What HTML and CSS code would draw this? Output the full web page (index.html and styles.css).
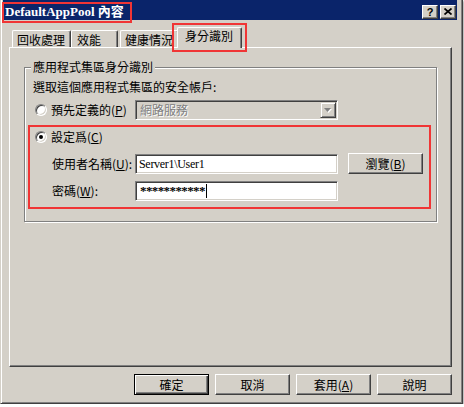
FILE: index.html
```html
<!DOCTYPE html>
<html>
<head>
<meta charset="utf-8">
<link rel="stylesheet" href="styles.css">
</head>
<body>
<div class="window">
  <div class="titlebar">
    <span class="title">DefaultAppPool 內容</span>
    <div class="title-buttons">
      <span class="tbtn help">?</span>
      <span class="tbtn close"><svg width="8" height="7" viewBox="0 0 8 7"><path d="M0.5 0.5L7.5 6.5M7.5 0.5L0.5 6.5" stroke="#000" stroke-width="1.7" fill="none"/></svg></span>
    </div>
  </div>

  <div class="content">
    <div class="tabs">
      <div class="tab t1">回收處理</div>
      <div class="tab t2">效能</div>
      <div class="tab t3">健康情況</div>
      <div class="tab active">身分識別</div>
    </div>

    <div class="panel">
      <div class="group">
        <div class="group-label">應用程式集區身分識別</div>
        <div class="hint">選取這個應用程式集區的安全帳戶:</div>

        <div class="row predefined">
          <span class="radio"></span>
          <span class="radio-text wide">預先定義的(<u>P</u>)</span>
          <div class="combo">
            <span class="combo-text">網路服務</span>
            <span class="combo-btn"><svg width="8" height="5" viewBox="0 0 8 5"><path d="M1 1h7L4.5 5z" fill="#fff"/><path d="M0 0h7L3.5 4z" fill="#808080"/></svg></span>
          </div>
        </div>

        <div class="custom">
          <div class="row choice">
            <span class="radio checked"></span>
            <span class="radio-text">設定爲(<u>C</u>)</span>
          </div>
          <div class="row field user">
            <span class="field-label">使用者名稱(<u>U</u>):</span>
            <div class="textbox">Server1\User1</div>
            <button class="btn browse">瀏覽(<u>B</u>)</button>
          </div>
          <div class="row field pass">
            <span class="field-label">密碼(<u>W</u>):</span>
            <div class="textbox secret">***********<span class="caret"></span></div>
          </div>
        </div>
      </div>
    </div>

    <div class="actions">
      <button class="btn default">確定</button>
      <button class="btn">取消</button>
      <button class="btn">套用(<u>A</u>)</button>
      <button class="btn">說明</button>
    </div>
  </div>

  <div class="mark mark-title"></div>
  <div class="mark mark-tab"></div>
</div>
</body>
</html>
```

FILE: styles.css
```css
* {
    box-sizing: border-box;
}

body {
    margin: 0;
    background: #fff;
    font-family: "Noto Sans CJK TC", "Noto Sans", sans-serif;
    font-size: 12px;
    line-height: 14px;
    color: #000;
}

u {
    text-underline-offset: 1px;
}

.window {
    position: relative;
    width: 463px;
    height: 404px;
    padding: 0 5px 0 2px;
    background: #d4d0c8;
    border-left: 1px solid #d4d0c8;
    border-right: 1px solid #404040;
    border-bottom: 1px solid #404040;
    box-shadow: inset 1px 0 0 #fff, inset -1px -1px 0 #808080, 1px 1px 2px rgba(0,0,0,0.35);
}

/* title bar */
.titlebar {
    display: flex;
    align-items: center;
    justify-content: space-between;
    height: 20px;
    padding: 3px 1px 0 2px;
    background: #0a246a;
    color: #fff;
}

.title {
    font-family: "Liberation Serif", "Noto Sans CJK TC", serif;
    font-weight: bold;
    font-size: 13px;
}

.title-buttons {
    display: flex;
    gap: 2px;
}

.tbtn {
    display: flex;
    align-items: center;
    justify-content: center;
    width: 16px;
    height: 14px;
    background: #d4d0c8;
    color: #000;
    border: 1px solid;
    border-color: #fff #404040 #404040 #fff;
    box-shadow: inset -1px -1px 0 #808080;
}

.help {
    font-family: "Liberation Sans", sans-serif;
    font-weight: bold;
    font-size: 11px;
    line-height: 12px;
}

/* tabs */
.content {
    padding-left: 6px;
}

.tabs {
    display: flex;
    align-items: flex-end;
    height: 27px;
    padding: 7px 0 0 3px;
}

.tab {
    height: 17px;
    padding: 2px 0 0 4px;
    white-space: nowrap;
    border-top: 1px solid #fff;
    border-left: 1px solid #fff;
    border-right: 1px solid #404040;
    border-radius: 2px 2px 0 0;
    box-shadow: inset -1px 0 0 #808080;
    background: #d4d0c8;
}

.t1 { width: 59px; }
.t2 { width: 47px; padding-left: 5px; }
.t3 { width: 59px; margin-left: 2px; }

.tab.active {
    position: relative;
    z-index: 1;
    width: 65px;
    height: 21px;
    margin-left: -2px;
    margin-bottom: -1px;
    padding: 1px 0 0 7px;
}

/* panel */
.panel {
    width: 443px;
    height: 320px;
    padding: 19px 0 0 14px;
    border: 1px solid;
    border-color: #fff #404040 #404040 #fff;
    box-shadow: inset -1px -1px 0 #808080;
}

.group {
    display: flex;
    flex-direction: column;
    align-items: flex-start;
    width: 413px;
    height: 155px;
    border: 1px solid #808080;
    box-shadow: 1px 1px 0 #fff, inset 1px 1px 0 #fff;
}

.group-label {
    margin: -8px 0 0 6px;
    padding: 0 2px;
    background: #d4d0c8;
}

.hint {
    margin: 6px 0 0 8px;
}

.row {
    display: flex;
    align-items: center;
}

.predefined {
    margin: 6px 0 0 10px;
}

.radio {
    width: 12px;
    height: 12px;
    flex: none;
    display: flex;
    align-items: center;
    justify-content: center;
    border-radius: 50%;
    background: #fff;
    border: 1px solid;
    border-color: #808080 #fff #fff #808080;
    box-shadow: inset 1px 1px 0 #404040, inset -1px -1px 0 #d4d0c8;
}

.radio.checked::after {
    content: "";
    width: 4px;
    height: 4px;
    border-radius: 50%;
    background: #000;
}

.radio-text {
    margin-left: 4px;
    white-space: nowrap;
}

.radio-text.wide {
    width: 84px;
}

.combo {
    display: flex;
    align-items: center;
    width: 203px;
    height: 20px;
    border: 1px solid;
    border-color: #808080 #fff #fff #808080;
    box-shadow: inset 1px 1px 0 #404040, inset -1px -1px 0 #d4d0c8;
}

.combo-text {
    padding-left: 4px;
    color: #808080;
    text-shadow: 1px 1px 0 #fff;
}

.combo-btn {
    display: flex;
    align-items: center;
    justify-content: center;
    width: 16px;
    height: 16px;
    margin: 0 1px 0 auto;
    border: 1px solid;
    border-color: #d4d0c8 #404040 #404040 #d4d0c8;
    box-shadow: inset 1px 1px 0 #fff, inset -1px -1px 0 #808080;
}

/* highlighted part */
.custom {
    width: 403px;
    height: 84px;
    margin: 5px 0 0 3px;
    padding: 2px 0 0 5px;
    border: 2px solid #f03535;
}

.choice {
    height: 16px;
}

.field {
    margin-left: 17px;
}

.user {
    margin-top: 8px;
}

.pass {
    margin-top: 7px;
}

.field-label {
    width: 83px;
    white-space: nowrap;
}

.textbox {
    display: flex;
    align-items: center;
    width: 203px;
    height: 20px;
    padding-left: 3px;
    background: #fff;
    font-family: "Liberation Serif", serif;
    font-size: 12px;
    letter-spacing: -0.3px;
    border: 1px solid;
    border-color: #808080 #fff #fff #808080;
    box-shadow: inset 1px 1px 0 #404040, inset -1px -1px 0 #d4d0c8;
}

.textbox.secret {
    padding-left: 4px;
    font-weight: bold;
    font-size: 13px;
    letter-spacing: -0.6px;
}

.caret {
    display: inline-block;
    width: 1px;
    height: 14px;
    margin-left: 1px;
    background: #000;
}

.btn {
    width: 75px;
    height: 21px;
    padding: 0;
    background: #d4d0c8;
    font-family: inherit;
    font-size: 12px;
    line-height: 14px;
    color: #000;
    border: 1px solid;
    border-color: #fff #404040 #404040 #fff;
    box-shadow: inset -1px -1px 0 #808080;
}

.browse {
    margin-left: 10px;
}

.actions {
    display: flex;
    justify-content: flex-end;
    gap: 6px;
    width: 443px;
    margin-top: 7px;
}

.btn.default {
    border-color: #000;
    box-shadow: inset 1px 1px 0 #fff, inset -1px -1px 0 #404040, inset -2px -2px 0 #808080;
}

/* red annotation boxes */
.mark {
    position: absolute;
    border: 2px solid #f03535;
}

.mark-title {
    left: 1px;
    top: 2px;
    width: 130px;
    height: 21px;
}

.mark-tab {
    left: 171px;
    top: 23px;
    width: 75px;
    height: 29px;
}
```
